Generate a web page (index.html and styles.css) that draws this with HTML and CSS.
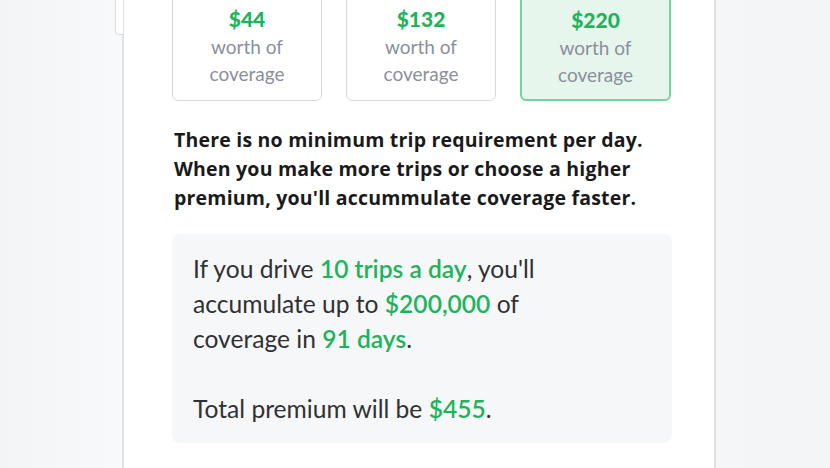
FILE: index.html
```html
<!DOCTYPE html>
<html lang="en">
<head>
<meta charset="utf-8">
<title>Coverage</title>
<link rel="stylesheet" href="styles.css">
</head>
<body>
<div class="stage">
  <div class="phone">
    <span class="side-button"></span>
    <div class="cards">
      <div class="card">
        <div class="price">$44</div>
        <div class="label">worth of<br>coverage</div>
      </div>
      <div class="card">
        <div class="price">$132</div>
        <div class="label">worth of<br>coverage</div>
      </div>
      <div class="card card-selected">
        <div class="price">$220</div>
        <div class="label">worth of<br>coverage</div>
      </div>
    </div>
    <p class="note">There is no minimum trip requirement per day. When you make more trips or choose a higher premium, you'll accummulate coverage faster.</p>
    <div class="summary">
      <p class="summary-text">If you drive <span class="hl">10 trips a day</span>, you'll accumulate up to <span class="hl">$200,000</span> of coverage in <span class="hl">91 days</span>.</p>
      <p class="summary-text">Total premium will be <span class="hl">$455</span>.</p>
    </div>
  </div>
</div>
</body>
</html>
```
FILE: styles.css
```css
html, body {
  margin: 0;
  padding: 0;
  height: 100%;
}
body {
  background: linear-gradient(90deg, #f3f4f6 0%, #f8f9fa 14%, #f4f5f7 100%);
  font-family: "Lato", "Liberation Sans", sans-serif;
  overflow: hidden;
}
.stage {
  display: flex;
  height: 100%;
  padding-left: 122px;
}
.phone {
  position: relative;
  height: 100%;
  background: #ffffff;
  border-left: 2px solid #e0e1e5;
  border-right: 2px solid #e0e1e5;
  padding: 0 42px 0 48px;
  box-sizing: content-box;
  width: 500px;
}
.side-button {
  position: absolute;
  left: -9px;
  top: -4px;
  width: 7px;
  height: 38px;
  background: #ffffff;
  border-left: 1.5px solid #dcdde1;
  border-bottom: 1.5px solid #dcdde1;
  border-bottom-left-radius: 4px;
}
.cards {
  display: grid;
  grid-template-columns: 150px 150px 151px;
  column-gap: 24px;
  margin-top: -10px;
}
.card {
  border: 1.5px solid #d6d9df;
  border-radius: 6px;
  padding: 14px 0 12px;
  text-align: center;
  background: #ffffff;
}
.card-selected {
  border: 2px solid #74d59c;
  background: #e6f6ec;
  padding: 13.5px 0 11.5px;
}
.price {
  color: #1fb35c;
  font-weight: 900;
  font-size: 21px;
  line-height: 28px;
}
.label {
  color: #8b8f9c;
  font-size: 19px;
  line-height: 27px;
}
.note {
  margin: 24px 0 0 2px;
  font-family: "Open Sans", "Liberation Sans", sans-serif;
  font-weight: 700;
  font-size: 19.5px;
  letter-spacing: 0.2px;
  line-height: 29px;
  color: #1a1a1c;
}
.summary {
  margin-top: 22px;
  background: #f6f7f9;
  border-radius: 8px;
  padding: 17px 21px 17px;
  display: flex;
  flex-direction: column;
  gap: 35px;
}
.summary-text {
  margin: 0;
  max-width: 410px;
  font-size: 24.6px;
  line-height: 35px;
  color: #313133;
}
.hl {
  color: #1fb35c;
  font-weight: 600;
}
```
